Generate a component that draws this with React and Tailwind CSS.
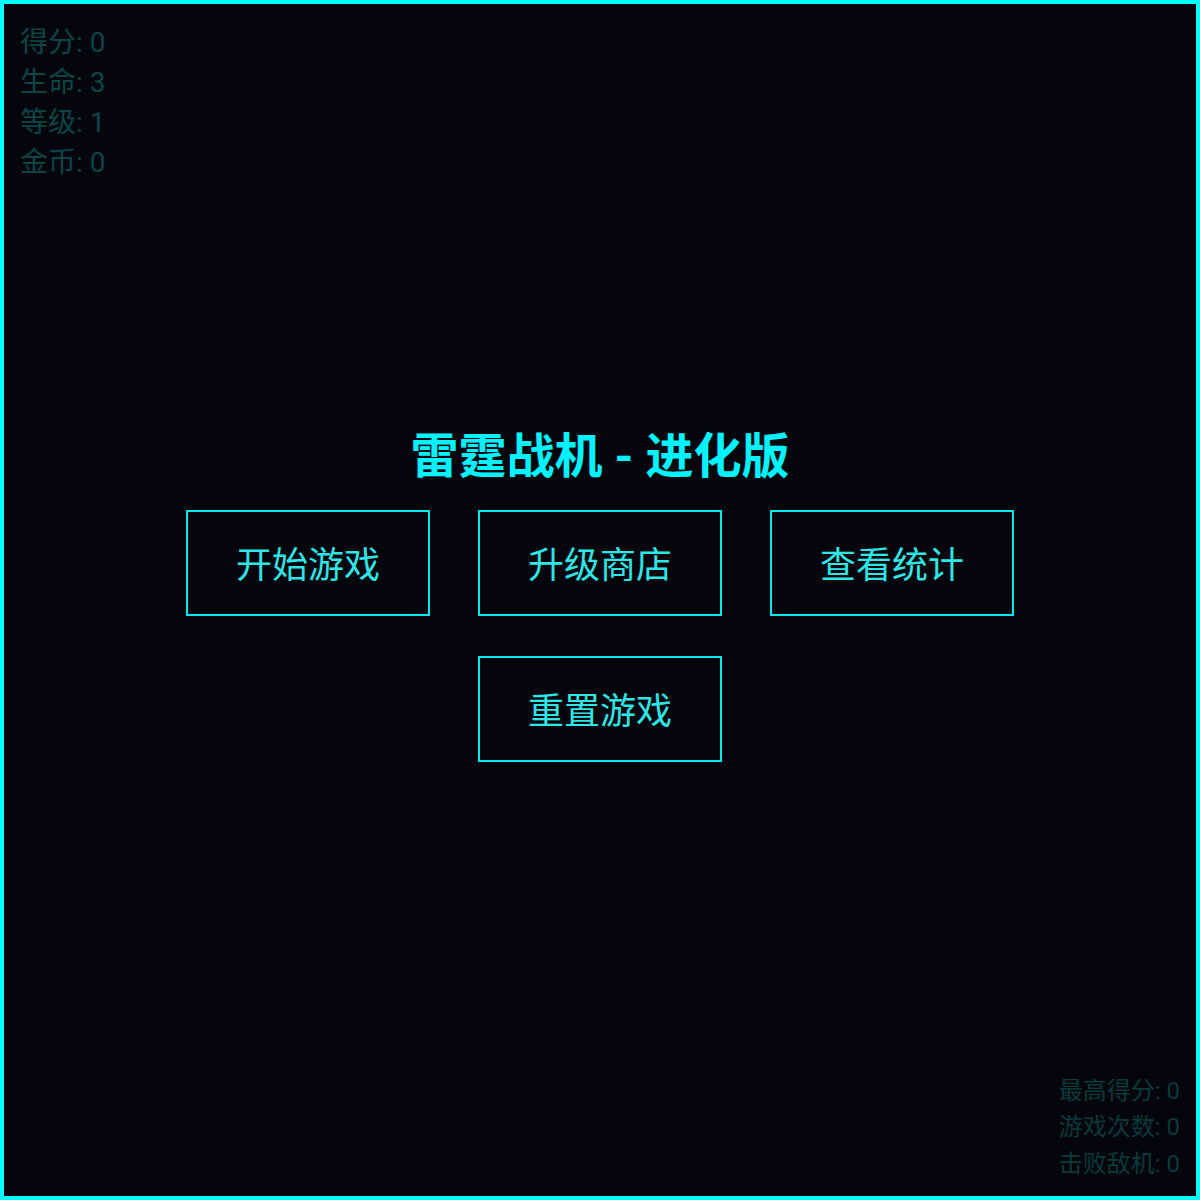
import React from "react";

const font = { fontFamily: 'Roboto, "Noto Sans CJK SC", sans-serif' };

function MenuButton({ children }) {
  return (
    <button className="w-[244px] h-[106px] border-2 border-[#00e8f0] bg-transparent text-[36px] text-[#2ee6e6] leading-none flex items-center justify-center pt-[5px]">
      {children}
    </button>
  );
}

export default function App() {
  return (
    <div
      className="relative w-[1200px] h-[1200px] border-4 border-[#00ffff] bg-[#05050d] overflow-hidden"
      style={font}
    >
      <div className="absolute left-[16px] top-[19px] flex flex-col text-[28px] leading-[40px] text-[#0b4545]">
        <div>得分: 0</div>
        <div>生命: 3</div>
        <div>等级: 1</div>
        <div>金币: 0</div>
      </div>

      <div className="flex flex-col items-center pt-[424px]">
        <h1 className="text-[48px] font-bold leading-[58px] text-[#00f4ff]">雷霆战机 - 进化版</h1>
        <div className="mt-[24px] flex gap-[48px]">
          <MenuButton>开始游戏</MenuButton>
          <MenuButton>升级商店</MenuButton>
          <MenuButton>查看统计</MenuButton>
        </div>
        <div className="mt-[40px] flex">
          <MenuButton>重置游戏</MenuButton>
        </div>
      </div>

      <div className="absolute right-[16px] bottom-[14px] flex flex-col items-end text-[24px] leading-[36.5px] text-[#0a3a3a]">
        <div>最高得分: 0</div>
        <div>游戏次数: 0</div>
        <div>击败敌机: 0</div>
      </div>
    </div>
  );
}
